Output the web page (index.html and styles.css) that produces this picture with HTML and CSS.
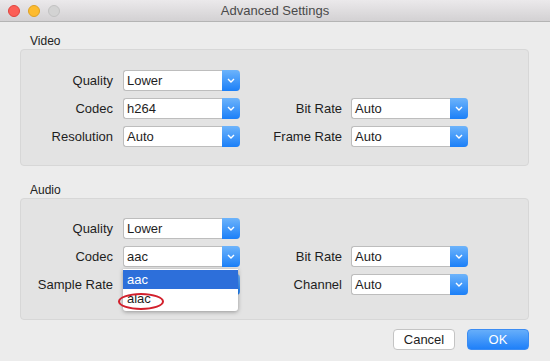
FILE: index.html
```html
<!DOCTYPE html>
<html>
<head>
<meta charset="utf-8">
<link rel="stylesheet" href="styles.css">
</head>
<body>
<div class="window">
  <div class="titlebar">
    <div class="lights">
      <span class="light red"></span>
      <span class="light yellow"></span>
      <span class="light gray"></span>
    </div>
    <div class="title">Advanced Settings</div>
  </div>
  <div class="content">
    <div class="group-title">Video</div>
    <div class="group video">
      <div class="label">Quality</div>
      <div class="select"><span class="value">Lower</span><span class="arrow"><svg width="8" height="5" viewBox="0 0 8 5"><polyline points="1,1 4,4 7,1" fill="none" stroke="#fff" stroke-width="1.4"/></svg></span></div>
      <div></div><div></div>
      <div class="label">Codec</div>
      <div class="select"><span class="value">h264</span><span class="arrow"><svg width="8" height="5" viewBox="0 0 8 5"><polyline points="1,1 4,4 7,1" fill="none" stroke="#fff" stroke-width="1.4"/></svg></span></div>
      <div class="label">Bit Rate</div>
      <div class="select"><span class="value">Auto</span><span class="arrow"><svg width="8" height="5" viewBox="0 0 8 5"><polyline points="1,1 4,4 7,1" fill="none" stroke="#fff" stroke-width="1.4"/></svg></span></div>
      <div class="label">Resolution</div>
      <div class="select"><span class="value">Auto</span><span class="arrow"><svg width="8" height="5" viewBox="0 0 8 5"><polyline points="1,1 4,4 7,1" fill="none" stroke="#fff" stroke-width="1.4"/></svg></span></div>
      <div class="label">Frame Rate</div>
      <div class="select"><span class="value">Auto</span><span class="arrow"><svg width="8" height="5" viewBox="0 0 8 5"><polyline points="1,1 4,4 7,1" fill="none" stroke="#fff" stroke-width="1.4"/></svg></span></div>
    </div>
    <div class="group-title audio-title">Audio</div>
    <div class="group audio">
      <div class="label">Quality</div>
      <div class="select"><span class="value">Lower</span><span class="arrow"><svg width="8" height="5" viewBox="0 0 8 5"><polyline points="1,1 4,4 7,1" fill="none" stroke="#fff" stroke-width="1.4"/></svg></span></div>
      <div></div><div></div>
      <div class="label">Codec</div>
      <div class="select open"><span class="value">aac</span><span class="arrow"><svg width="8" height="5" viewBox="0 0 8 5"><polyline points="1,1 4,4 7,1" fill="none" stroke="#fff" stroke-width="1.4"/></svg></span>
        <div class="menu">
          <div class="item selected">aac</div>
          <div class="item">alac</div>
          <div class="circle"></div>
        </div>
      </div>
      <div class="label">Bit Rate</div>
      <div class="select"><span class="value">Auto</span><span class="arrow"><svg width="8" height="5" viewBox="0 0 8 5"><polyline points="1,1 4,4 7,1" fill="none" stroke="#fff" stroke-width="1.4"/></svg></span></div>
      <div class="label">Sample Rate</div>
      <div class="select"><span class="value"></span><span class="arrow"><svg width="8" height="5" viewBox="0 0 8 5"><polyline points="1,1 4,4 7,1" fill="none" stroke="#fff" stroke-width="1.4"/></svg></span></div>
      <div class="label">Channel</div>
      <div class="select"><span class="value">Auto</span><span class="arrow"><svg width="8" height="5" viewBox="0 0 8 5"><polyline points="1,1 4,4 7,1" fill="none" stroke="#fff" stroke-width="1.4"/></svg></span></div>
    </div>
    <div class="buttons">
      <div class="btn cancel">Cancel</div>
      <div class="btn ok">OK</div>
    </div>
  </div>
</div>
</body>
</html>
```

FILE: styles.css
```css
* { box-sizing: border-box; }
html, body { margin: 0; padding: 0; }
body {
  width: 550px;
  height: 361px;
  overflow: hidden;
  background: #ececec;
  font-family: "Liberation Sans", Arial, sans-serif;
  color: #1e1e1e;
}
.window { width: 550px; height: 361px; background: #ececec; }
.titlebar {
  height: 22px;
  position: relative;
  background: linear-gradient(#ebe9eb, #d3d1d3);
  border-bottom: 1px solid #b4b4b4;
  display: flex;
  align-items: center;
  justify-content: center;
}
.lights {
  position: absolute;
  left: 8px;
  top: 5px;
  display: flex;
  gap: 8px;
}
.light {
  width: 12px;
  height: 12px;
  border-radius: 50%;
  display: block;
}
.red { background: #fc5f57; border: 1px solid #e0443e; }
.yellow { background: #fdbb2e; border: 1px solid #dea123; }
.gray { background: #d3d3d3; border: 1px solid #c2c2c2; }
.title {
  font-size: 13px;
  color: #4a4a4a;
  line-height: 16px;
}
.content { padding: 12px 21px 0 20px; }
.group-title {
  font-size: 12px;
  line-height: 14px;
  padding-left: 10px;
  margin-bottom: 1px;
  color: #222;
}
.audio-title { margin-top: 17px; }
.group {
  background: #e3e3e3;
  border: 1px solid #d7d7d7;
  border-radius: 4px;
  display: grid;
  grid-template-columns: 92px 127px 102px 126px;
  row-gap: 7px;
  grid-auto-rows: 21px;
}
.video { padding: 20px 0 18px 0; }
.audio { padding: 19px 0 24px 0; }
.label {
  font-size: 13px;
  text-align: right;
  line-height: 21px;
  color: #1e1e1e;
}
.group > .select:nth-child(4n+2) { margin-left: 10px; width: 117px; }
.group > .select:nth-child(4n) { margin-left: 9px; width: 117px; }
.select {
  position: relative;
  height: 21px;
  display: flex;
  background: #fff;
  border: 1px solid #bdbdbd;
  border-right: none;
  border-radius: 3px 4px 4px 3px;
}
.value {
  flex: 1;
  font-size: 13px;
  line-height: 19px;
  padding-left: 3px;
  color: #1e1e1e;
}
.arrow {
  width: 18px;
  margin: -1px 0;
  background: linear-gradient(#6db4fb, #1b7ff8);
  border-radius: 0 4px 4px 0;
  display: flex;
  align-items: center;
  justify-content: center;
}
.menu {
  position: absolute;
  left: -1px;
  top: 22px;
  width: 115px;
  height: 42px;
  background: #fff;
  box-shadow: 0 1px 4px rgba(0,0,0,0.35);
  border-radius: 0 0 3px 3px;
  z-index: 5;
  padding-top: 1px;
}
.item {
  height: 19px;
  line-height: 19px;
  font-size: 13px;
  padding-left: 4px;
  color: #1e1e1e;
}
.item.selected {
  background: #2d6fda;
  color: #fff;
}
.circle {
  position: absolute;
  left: -5px;
  top: 24px;
  width: 46px;
  height: 17px;
  border: 2px solid #d2202c;
  border-radius: 50%;
}
.buttons {
  display: flex;
  justify-content: flex-end;
  gap: 12px;
  margin-top: 9px;
}
.btn {
  width: 62px;
  height: 21px;
  border-radius: 4px;
  font-size: 13px;
  line-height: 19px;
  text-align: center;
}
.cancel {
  background: #fff;
  border: 1px solid #c4c4c4;
  color: #1e1e1e;
}
.ok {
  background: linear-gradient(#66aefa, #1f80f9);
  border: 1px solid #3b8cf3;
  color: #fff;
}
```
